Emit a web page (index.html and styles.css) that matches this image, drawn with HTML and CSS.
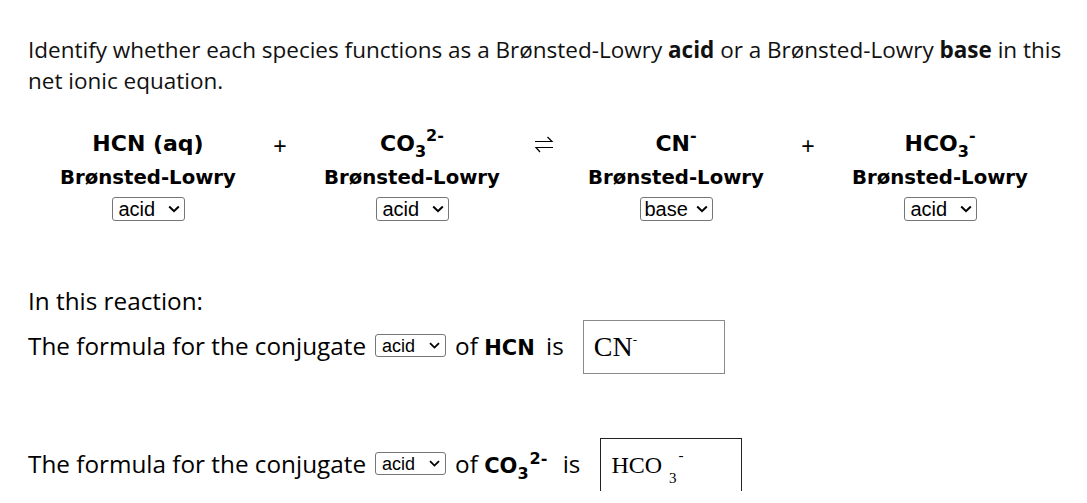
FILE: index.html
```html
<!DOCTYPE html>
<html>
<head>
<meta charset="utf-8">
<link rel="stylesheet" href="styles.css">
</head>
<body>
<div class="page">
  <p class="intro">Identify whether each species functions as a Brønsted-Lowry <b>acid</b> or a Brønsted-Lowry <b>base</b> in this net ionic equation.</p>

  <div class="equation">
    <div class="species">
      <div class="formula">HCN (aq)</div>
      <div class="label">Brønsted-Lowry</div>
      <span class="sel-wrap"><select class="sel"><option>acid</option><option>base</option></select><svg class="chev" width="12" height="8" viewBox="0 0 12 8"><path d="M1.2 1.5 L6 6.2 L10.8 1.5" fill="none" stroke="#000" stroke-width="2"/></svg></span>
    </div>
    <div class="op plus">+</div>
    <div class="species">
      <div class="formula">CO<sub>3</sub><sup>2-</sup></div>
      <div class="label">Brønsted-Lowry</div>
      <span class="sel-wrap"><select class="sel"><option>acid</option><option>base</option></select><svg class="chev" width="12" height="8" viewBox="0 0 12 8"><path d="M1.2 1.5 L6 6.2 L10.8 1.5" fill="none" stroke="#000" stroke-width="2"/></svg></span>
    </div>
    <div class="op">
      <svg class="eq-arrow" width="20" height="18" viewBox="0 0 20 18">
        <path d="M1 5.5 H18 L13.5 1" fill="none" stroke="#000" stroke-width="1.2"/>
        <path d="M19 11.5 H2 L6 16" fill="none" stroke="#000" stroke-width="1.2"/>
      </svg>
    </div>
    <div class="species">
      <div class="formula">CN<sup>-</sup></div>
      <div class="label">Brønsted-Lowry</div>
      <span class="sel-wrap"><select class="sel base"><option>base</option><option>acid</option></select><svg class="chev" width="12" height="8" viewBox="0 0 12 8"><path d="M1.2 1.5 L6 6.2 L10.8 1.5" fill="none" stroke="#000" stroke-width="2"/></svg></span>
    </div>
    <div class="op plus">+</div>
    <div class="species">
      <div class="formula">HCO<sub>3</sub><sup>-</sup></div>
      <div class="label">Brønsted-Lowry</div>
      <span class="sel-wrap"><select class="sel"><option>acid</option><option>base</option></select><svg class="chev" width="12" height="8" viewBox="0 0 12 8"><path d="M1.2 1.5 L6 6.2 L10.8 1.5" fill="none" stroke="#000" stroke-width="2"/></svg></span>
    </div>
  </div>

  <div class="questions">
    <p class="lead">In this reaction:</p>
    <div class="qrow">
      <span>The formula for the conjugate</span>
      <span class="sel-wrap small"><select class="sel"><option>acid</option><option>base</option></select><svg class="chev" width="11" height="7" viewBox="0 0 11 7"><path d="M1 1.2 L5.5 5.6 L10 1.2" fill="none" stroke="#000" stroke-width="1.8"/></svg></span>
      <span>of <b class="chem">HCN</b> is</span>
      <div class="answer grey">CN<sup>-</sup></div>
    </div>
    <div class="qrow second">
      <span>The formula for the conjugate</span>
      <span class="sel-wrap small"><select class="sel"><option>acid</option><option>base</option></select><svg class="chev" width="11" height="7" viewBox="0 0 11 7"><path d="M1 1.2 L5.5 5.6 L10 1.2" fill="none" stroke="#000" stroke-width="1.8"/></svg></span>
      <span>of <b class="chem wide">CO<sub>3</sub><sup>2-</sup></b> is</span>
      <div class="answer dark">HCO<sub>3</sub><sup>-</sup></div>
    </div>
  </div>
</div>
</body>
</html>
```

FILE: styles.css
```css
html, body {
  margin: 0;
  padding: 0;
  background: #fff;
  color: #000;
}
.page {
  padding: 34px 0 0 28px;
  font-family: "Open Sans", sans-serif;
}
.intro {
  margin: 0;
  width: 1052px;
  font-size: 22.5px;
  line-height: 31px;
  color: #111;
}
.intro b {
  font-weight: 700;
}
.equation {
  display: grid;
  grid-template-columns: 180px 84px 180px 84px 180px 84px 180px;
  margin-left: 30px;
  margin-top: 34px;
  font-family: "DejaVu Sans", Verdana, sans-serif;
}
.species {
  display: flex;
  flex-direction: column;
  align-items: center;
}
.formula {
  font-weight: 700;
  font-size: 22px;
  line-height: 28px;
  height: 28px;
}
.formula sub {
  font-size: 16px;
  vertical-align: -6px;
  line-height: 0;
}
.formula sup {
  font-size: 16px;
  vertical-align: 10px;
  line-height: 0;
}
.label {
  font-weight: 700;
  font-size: 19.7px;
  line-height: 26px;
  margin-top: 7px;
}
.sel-wrap {
  position: relative;
  display: inline-flex;
  margin-top: 6px;
}
.sel {
  -webkit-appearance: none;
  appearance: none;
  box-sizing: border-box;
  width: 73px;
  height: 24px;
  margin: 0;
  padding: 0 0 0 6px;
  font-family: "Liberation Sans", Arial, sans-serif;
  font-size: 20px;
  line-height: 22px;
  border: 1px solid #767676;
  border-radius: 3px;
  background: #fff;
  color: #000;
}
.sel.base {
  padding-left: 4px;
}
.chev {
  position: absolute;
  right: 5px;
  top: 8px;
  pointer-events: none;
}
.sel-wrap.small {
  margin-top: 0;
}
.sel-wrap.small .sel {
  width: 71px;
  height: 23px;
  font-size: 18px;
  padding-left: 6px;
}
.sel-wrap.small .chev {
  right: 6px;
  top: 8px;
}
.op {
  display: flex;
  justify-content: center;
  padding-top: 2px;
}
.plus {
  font-family: "Liberation Sans", Arial, sans-serif;
  font-size: 23px;
  line-height: 28px;
}
.eq-arrow {
  margin-top: 4px;
}
.questions {
  margin-top: 64px;
  font-family: "Open Sans", sans-serif;
  font-size: 24.3px;
}
.lead {
  margin: 0;
  line-height: 32px;
}
.qrow {
  display: flex;
  align-items: center;
  gap: 9px;
  margin-top: 1px;
  height: 54px;
}
.qrow.second {
  margin-top: 64px;
  height: 55px;
}
.chem {
  font-family: "DejaVu Sans", Verdana, sans-serif;
  font-weight: 700;
  font-size: 21px;
  margin-right: 5px;
}
.chem.wide {
  margin-right: 9px;
}
.chem sub {
  font-size: 16px;
  vertical-align: -6px;
  line-height: 0;
}
.chem sup {
  font-size: 16px;
  vertical-align: 9px;
  line-height: 0;
  margin-left: 1px;
}
.answer {
  box-sizing: border-box;
  width: 142px;
  height: 54px;
  margin-left: 10px;
  margin-top: 4px;
  padding: 0 10px;
  font-family: "Liberation Serif", "Times New Roman", serif;
  display: flex;
  align-items: baseline;
}
.answer.grey {
  border: 1px solid #8a8a8a;
  font-size: 28px;
  line-height: 52px;
}
.answer.dark {
  border: 1px solid #222;
  height: 55px;
  font-size: 24px;
  line-height: 53px;
  margin-left: 11px;
}
.answer sup {
  font-size: 13px;
  line-height: 0;
  position: relative;
  top: -12px;
}
.answer.dark sub {
  font-size: 15px;
  line-height: 0;
  position: relative;
  top: 10px;
  margin-left: 7px;
}
.answer.dark sup {
  font-size: 15px;
  top: -13px;
  margin-left: 2px;
}
```
